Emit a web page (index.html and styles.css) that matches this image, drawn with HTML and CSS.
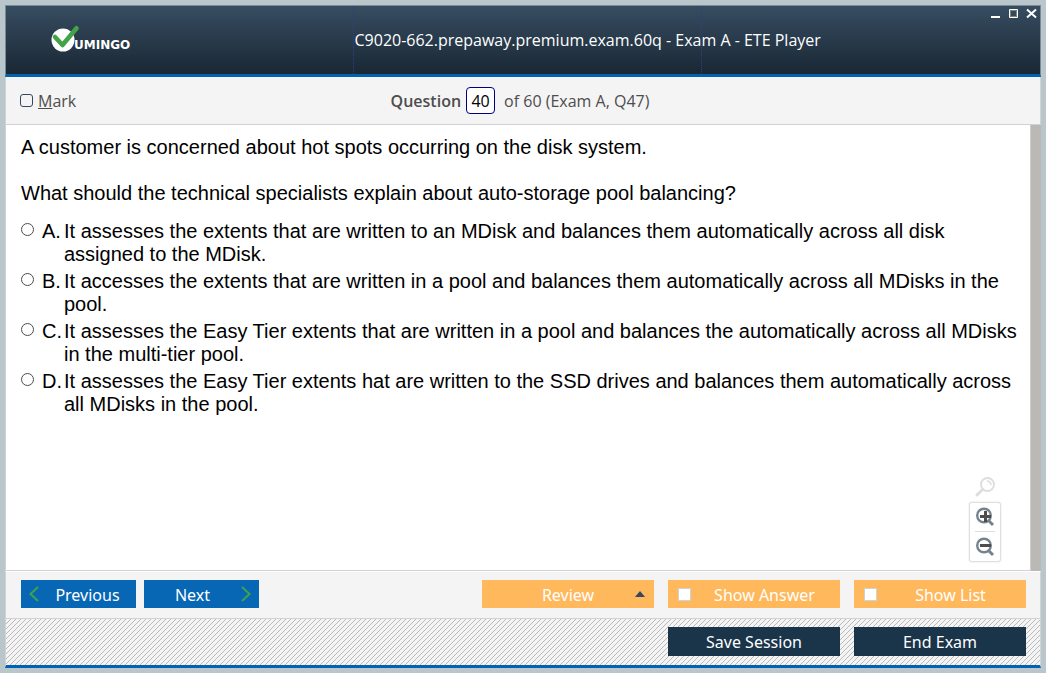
FILE: index.html
```html
<!DOCTYPE html>
<html lang="en">
<head>
<meta charset="utf-8">
<title>C9020-662.prepaway.premium.exam.60q - Exam A - ETE Player</title>
<link rel="stylesheet" href="styles.css">
</head>
<body>
<div class="window">
  <header class="titlebar">
    <div class="brand">
      <svg class="logo" width="82" height="28" viewBox="0 0 82 28" role="img" aria-label="Vumingo">
        <circle cx="12" cy="15" r="11.500" fill="#fff"/>
        <path d="M4 12l7.500 8L25.500 3.200" fill="none" stroke="#43a347" stroke-width="4.600" stroke-linecap="round" stroke-linejoin="round"/>
        <text class="logo-text" x="23" y="24">UMINGO</text>
      </svg>
    </div>
    <h1 class="title">C9020-662.prepaway.premium.exam.60q - Exam A - ETE Player</h1>
    <div class="controls">
      <button class="control" type="button" aria-label="Minimize"><svg width="11" height="11" viewBox="0 0 11 11"><path d="M1 8h9v2H1z" fill="#fff"/></svg></button>
      <button class="control" type="button" aria-label="Maximize"><svg width="11" height="11" viewBox="0 0 11 11"><path d="M1.500 1.500h8v8h-8z" fill="none" stroke="#fff"/><path d="M2.500 2.500h6v6h-6z" fill="none" stroke="#85827c"/></svg></button>
      <button class="control" type="button" aria-label="Close"><svg width="11" height="11" viewBox="0 0 11 11"><path d="M1 1.500l9 8M10 1.500l-9 8" fill="none" stroke="#fff" stroke-width="2"/></svg></button>
    </div>
  </header>

  <div class="infobar">
    <label class="mark"><input class="mark-box" type="checkbox"><span><u>M</u>ark</span></label>
    <div class="position">
      <label class="position-label" for="question">Question</label>
      <input class="position-input" id="question" type="text" value="40">
      <span>of 60 (Exam A, Q47)</span>
    </div>
  </div>

  <main class="content">
    <div class="page">
      <p class="question">A customer is concerned about hot spots occurring on the disk system.</p>
      <p class="question">What should the technical specialists explain about auto-storage pool balancing?</p>
      <div class="options">
        <label class="option"><input class="radio" type="radio" name="answer"><span class="letter">A.</span><span>It assesses the extents that are written to an MDisk and balances them automatically across all disk assigned to the MDisk.</span></label>
        <label class="option"><input class="radio" type="radio" name="answer"><span class="letter">B.</span><span>It accesses the extents that are written in a pool and balances them automatically across all MDisks in the pool.</span></label>
        <label class="option"><input class="radio" type="radio" name="answer"><span class="letter">C.</span><span>It assesses the Easy Tier extents that are written in a pool and balances the automatically across all MDisks in the multi-tier pool.</span></label>
        <label class="option"><input class="radio" type="radio" name="answer"><span class="letter">D.</span><span>It assesses the Easy Tier extents hat are written to the SSD drives and balances them automatically across all MDisks in the pool.</span></label>
      </div>
    </div>
    <div class="zoom">
      <button class="zoom-button" type="button" aria-label="Reset zoom"><svg width="20" height="20" viewBox="0 0 20 20" fill="none" stroke="#dedede" stroke-linecap="round"><circle cx="12.500" cy="7.500" r="6.500" stroke-width="2"/><path d="M12.500 4q3 .500 3.500 3.500" stroke-width="1.500"/><path d="M7.500 12.500L2 18" stroke-width="3"/></svg></button>
      <div class="zoom-group">
        <button class="zoom-button" type="button" aria-label="Zoom in"><svg width="20" height="20" viewBox="0 0 20 20" fill="none"><circle cx="9" cy="8.500" r="6.800" stroke="#75838e" stroke-width="2.400"/><path d="M13.500 13.500l4.500 4.500" stroke="#75838e" stroke-width="3"/><path d="M5 9.500h11M10.500 4v11" stroke="#4d4d4d" stroke-width="3"/></svg></button>
        <button class="zoom-button zoom-out" type="button" aria-label="Zoom out"><svg width="20" height="20" viewBox="0 0 20 20" fill="none"><circle cx="9" cy="8.500" r="6.800" stroke="#75838e" stroke-width="2.400"/><path d="M13.500 13.500l4.500 4.500" stroke="#75838e" stroke-width="3"/><path d="M5 8.500h11" stroke="#4d4d4d" stroke-width="3"/></svg></button>
      </div>
    </div>
    <div class="scrollbar"></div>
  </main>

  <nav class="toolbar">
    <div class="group near">
      <button class="nav-button" type="button"><svg width="10" height="16" viewBox="0 0 10 16"><path d="M9 1L1.500 8 9 15" fill="none" stroke="#3fa34d" stroke-width="2"/></svg><span class="caption">Previous</span></button>
      <button class="nav-button" type="button"><span class="caption">Next</span><svg width="10" height="16" viewBox="0 0 10 16"><path d="M1 1l7.500 7L1 15" fill="none" stroke="#3fa34d" stroke-width="2"/></svg></button>
    </div>
    <div class="group">
      <button class="tool review" type="button"><span class="caption">Review</span><svg width="10" height="6" viewBox="0 0 10 6"><path d="M0 6l5-6 5 6z" fill="#34495e"/></svg></button>
      <label class="tool"><input class="tool-box" type="checkbox"><span class="caption">Show Answer</span></label>
      <label class="tool"><input class="tool-box" type="checkbox"><span class="caption">Show List</span></label>
    </div>
  </nav>

  <footer class="footer">
    <button class="session" type="button">Save Session</button>
    <button class="session" type="button">End Exam</button>
  </footer>
</div>
</body>
</html>
```
FILE: styles.css
```css
* {
  box-sizing: border-box;
}

body {
  margin: 0;
  background: #b9c6cc;
  font-family: "Open Sans", "Noto Sans", sans-serif;
  font-size: 16px;
  color: #4d4d4d;
}

button,
input {
  margin: 0;
  font: inherit;
}

button {
  border: 0;
  padding: 0;
  background: none;
}

svg {
  display: block;
  flex: none;
}

.window {
  display: flex;
  flex-direction: column;
  height: 100vh;
  padding: 5px;
}

.titlebar {
  display: grid;
  grid-template-columns: 1fr 349px 1fr;
  height: 72px;
  padding-left: 8px;
  border: 1px solid #7c8b90;
  border-bottom: 3px solid #0062b1;
  background: linear-gradient(#364d61, #1a2734);
}

.brand {
  padding: 19px 0 0 37px;
}

.logo {
  overflow: visible;
}

.logo-text {
  font: bold 12px "DejaVu Sans", sans-serif;
  fill: #fff;
}

.title {
  display: flex;
  align-items: center;
  margin: 0;
  padding-left: 1px;
  border: 1px dotted #2f3f86;
  border-width: 0 1px;
  font-size: 16px;
  font-weight: 400;
  white-space: nowrap;
  color: #fff;
}

.controls {
  display: flex;
  justify-content: flex-end;
  gap: 7px;
  padding: 2px 3px 0 0;
}

.control {
  height: 11px;
}

.infobar {
  display: grid;
  grid-template-columns: 1fr auto 1fr;
  align-items: center;
  height: 48px;
  padding: 0 20px 0 14px;
  border: 1px solid #d2d2d2;
  border-top: 0;
  background: #f4f4f4;
}

.mark {
  display: flex;
  align-items: center;
  gap: 5px;
}

.mark-box {
  appearance: none;
  width: 13px;
  height: 13px;
  border: 1px solid #34495e;
  border-radius: 3px;
}

.position {
  display: flex;
  align-items: center;
  gap: 5px;
}

.position-label {
  font-weight: 600;
}

.position-input {
  width: 29px;
  height: 27px;
  margin-right: 4px;
  padding: 0;
  border: 1px solid #000080;
  border-radius: 4px;
  background: #fff;
  text-align: center;
  color: #000;
}

.content {
  position: relative;
  display: flex;
  flex: 1;
  min-height: 0;
  border-left: 1px solid #d2d2d2;
  background: #fff;
}

.page {
  flex: 1;
  padding: 11px 8px 0 15px;
  border-bottom: 1px solid #d2d2d2;
  font-family: "Liberation Sans", Arial, sans-serif;
  font-size: 20px;
  line-height: 23px;
  color: #000;
}

.question {
  margin: 0 0 23px;
}

.options {
  display: grid;
  gap: 4px;
  margin-top: -8px;
}

.option {
  display: grid;
  grid-template-columns: 21px 22px 1fr;
}

.radio {
  appearance: none;
  width: 13px;
  height: 13px;
  margin-top: 3px;
  border: 1px solid #4d4d4d;
  border-radius: 50%;
  background: #fff;
}

.letter {
  white-space: nowrap;
}

.scrollbar {
  width: 11px;
  border-left: 1px solid #cecece;
  background: #bab9b5;
}

.zoom {
  position: absolute;
  right: 40px;
  bottom: 9px;
  display: grid;
  justify-items: center;
  gap: 5px;
}

.zoom-group {
  padding: 4px 5px;
  border: 1px solid #e0e0e0;
  border-radius: 3px;
  background: #fff;
  box-shadow: 0 0 2px #ddd;
}

.zoom-button {
  display: block;
}

.zoom-out {
  margin-top: 4px;
  padding-top: 5px;
  border-top: 1px solid #dedede;
}

.toolbar {
  display: flex;
  justify-content: space-between;
  padding: 8px 14px 10px 15px;
  border: 1px solid #d2d2d2;
  border-top-color: #fff;
  background: #f4f4f4;
}

.group {
  display: flex;
  gap: 14px;
}

.near {
  gap: 8px;
}

.nav-button,
.tool,
.session {
  display: flex;
  align-items: center;
  height: 28px;
  font-family: "Noto Sans", sans-serif;
  color: #fff;
}

.caption {
  flex: 1;
  padding-top: 2px;
  text-align: center;
}

.nav-button {
  gap: 8px;
  width: 115px;
  padding: 0 8px;
  background: #0767b5;
}

.tool {
  gap: 8px;
  width: 172px;
  padding: 0 10px;
  background: #ffb85c;
}

.review {
  padding: 0 9px 0 27px;
}

.tool-box {
  appearance: none;
  width: 13px;
  height: 13px;
  border: 1px solid #d2d2d2;
  background: #fff;
}

.footer {
  display: flex;
  justify-content: flex-end;
  gap: 14px;
  height: 49px;
  padding: 8px 14px 0;
  border: 1px solid #d2d2d2;
  border-top: 0;
  border-bottom: 3px solid #0062b1;
  background: #f4f4f4 linear-gradient(135deg, transparent 42%, #bababa 42%, #bababa 58%, transparent 58%) 0 0 / 5px 5px;
}

.session {
  justify-content: center;
  width: 172px;
  height: 29px;
  background: #1a344a;
}
```
